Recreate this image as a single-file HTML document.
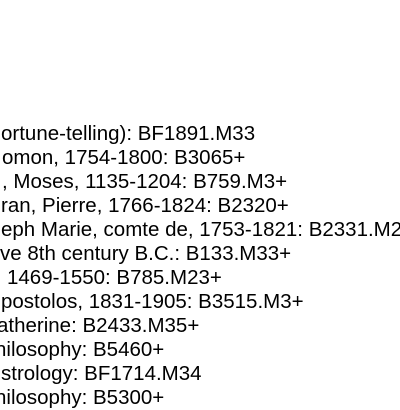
<html><head><style>
body{margin:0;width:400px;height:400px;overflow:hidden;background:#fff;position:relative;font-family:"Liberation Sans",Arial,sans-serif;font-size:20.5px;color:#000}
div{position:absolute;white-space:nowrap;line-height:24px}
</style></head><body>
<div style="left:1px;top:122px">ortune-telling): BF1891.M33</div>
<div style="left:2px;top:146px">omon, 1754-1800: B3065+</div>
<div style="left:2px;top:170px">, Moses, 1135-1204: B759.M3+</div>
<div style="left:1px;top:194px">ran, Pierre, 1766-1824: B2320+</div>
<div style="left:1px;top:218px">eph Marie, comte de, 1753-1821: B2331.M2</div>
<div style="left:0px;top:242px">ve 8th century B.C.: B133.M33+</div>
<div style="left:7px;top:266px">1469-1550: B785.M23+</div>
<div style="left:1px;top:290px">postolos, 1831-1905: B3515.M3+</div>
<div style="left:-3px;top:314px">atherine: B2433.M35+</div>
<div style="left:-5px;top:338px">hilosophy: B5460+</div>
<div style="left:1px;top:362px">strology: BF1714.M34</div>
<div style="left:-5px;top:386px">hilosophy: B5300+</div>
</body></html>
